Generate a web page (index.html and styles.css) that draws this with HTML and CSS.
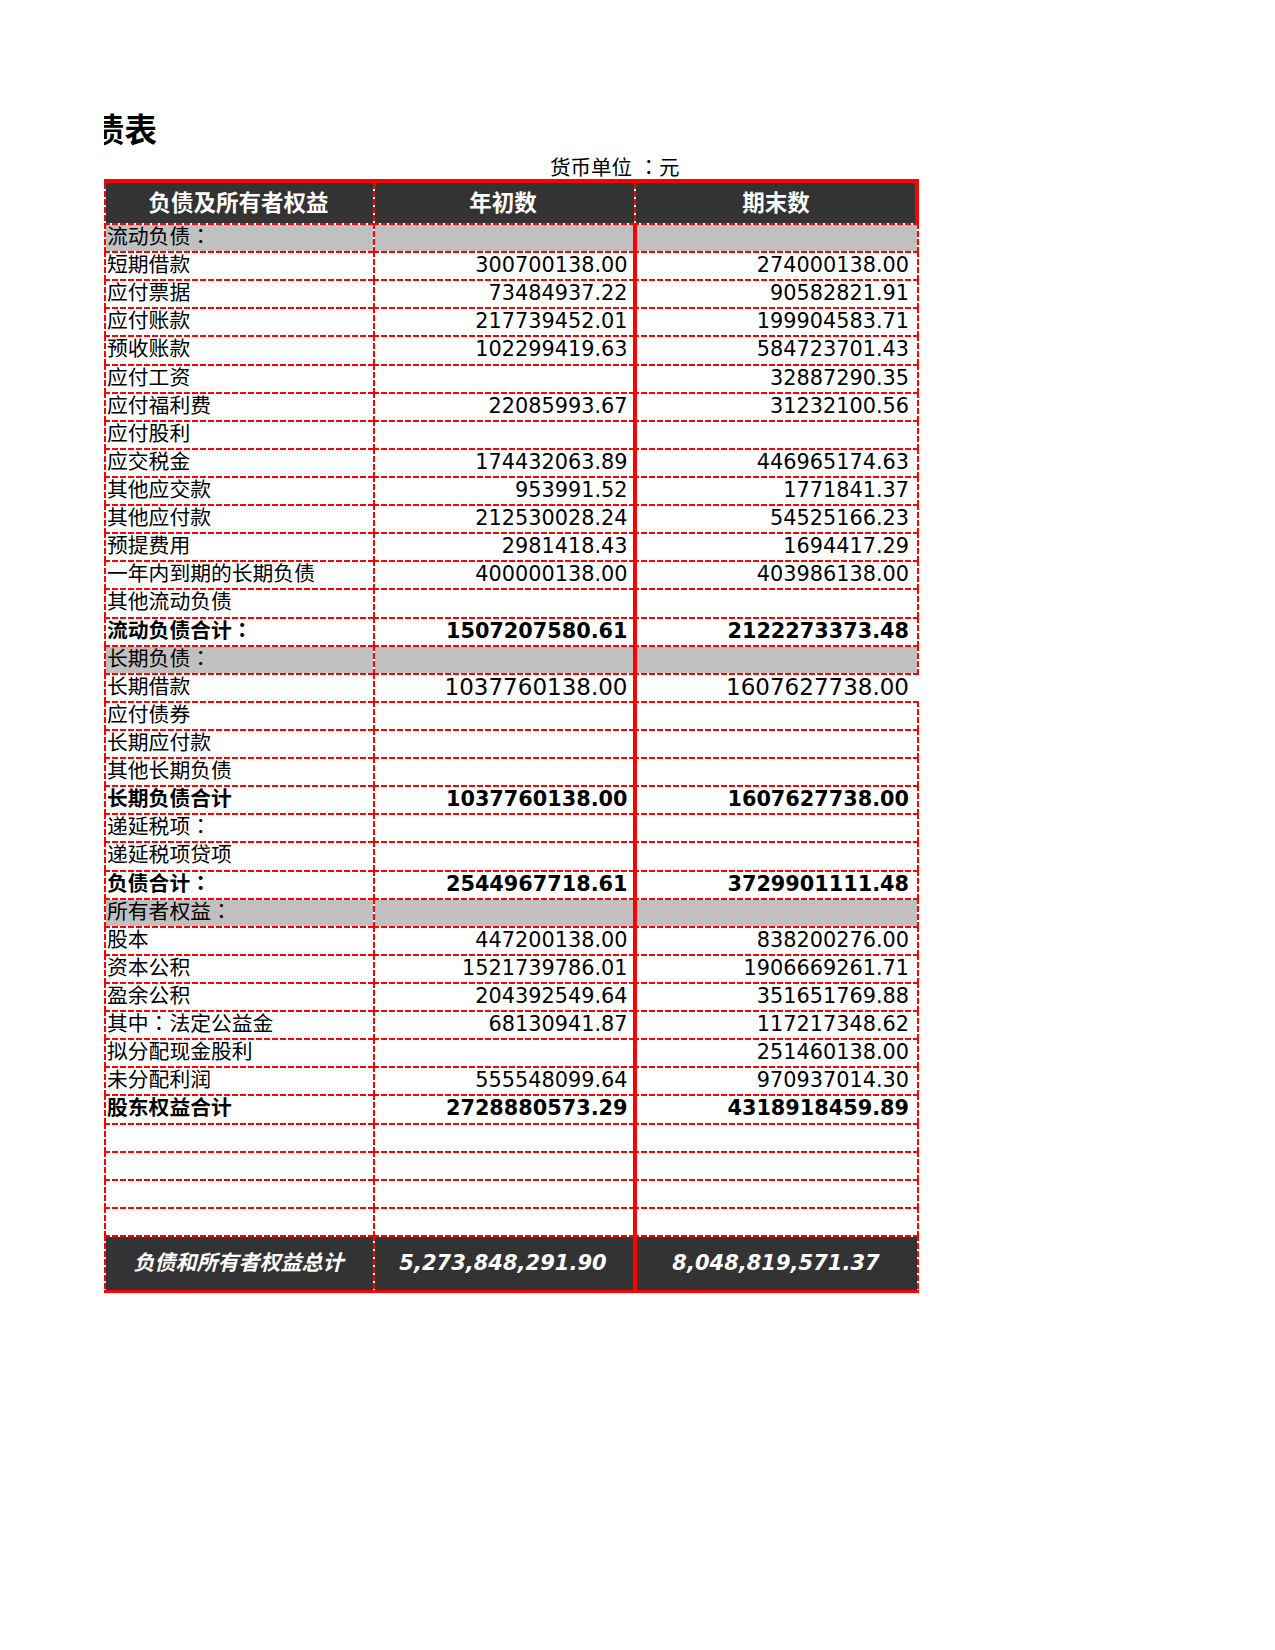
FILE: index.html
```html
<!DOCTYPE html>
<html lang="zh-CN">
<head>
<meta charset="utf-8">
<title>资产负债表</title>
<link rel="stylesheet" href="styles.css">
</head>
<body>
<div class="page">
  <div class="title">债表</div>
  <div class="unit">货币单位 <span class="cl" lang="zh-TW">：</span>元</div>
  <div class="sheet">
    <div class="row hdr"><div class="cell c1">负债及所有者权益</div><div class="cell c2">年初数</div><div class="cell c3">期末数</div></div>

    <div class="row g"><div class="cell c1">流动负债<span class="cl" lang="zh-TW">：</span></div><div class="cell c2"></div><div class="cell c3"></div></div>
    <div class="row"><div class="cell c1">短期借款</div><div class="cell c2">300700138.00</div><div class="cell c3">274000138.00</div></div>
    <div class="row"><div class="cell c1">应付票据</div><div class="cell c2">73484937.22</div><div class="cell c3">90582821.91</div></div>
    <div class="row"><div class="cell c1">应付账款</div><div class="cell c2">217739452.01</div><div class="cell c3">199904583.71</div></div>
    <div class="row"><div class="cell c1">预收账款</div><div class="cell c2">102299419.63</div><div class="cell c3">584723701.43</div></div>
    <div class="row"><div class="cell c1">应付工资</div><div class="cell c2"></div><div class="cell c3">32887290.35</div></div>
    <div class="row"><div class="cell c1">应付福利费</div><div class="cell c2">22085993.67</div><div class="cell c3">31232100.56</div></div>
    <div class="row"><div class="cell c1">应付股利</div><div class="cell c2"></div><div class="cell c3"></div></div>
    <div class="row"><div class="cell c1">应交税金</div><div class="cell c2">174432063.89</div><div class="cell c3">446965174.63</div></div>
    <div class="row"><div class="cell c1">其他应交款</div><div class="cell c2">953991.52</div><div class="cell c3">1771841.37</div></div>
    <div class="row"><div class="cell c1">其他应付款</div><div class="cell c2">212530028.24</div><div class="cell c3">54525166.23</div></div>
    <div class="row"><div class="cell c1">预提费用</div><div class="cell c2">2981418.43</div><div class="cell c3">1694417.29</div></div>
    <div class="row"><div class="cell c1">一年内到期的长期负债</div><div class="cell c2">400000138.00</div><div class="cell c3">403986138.00</div></div>
    <div class="row"><div class="cell c1">其他流动负债</div><div class="cell c2"></div><div class="cell c3"></div></div>
    <div class="row b"><div class="cell c1">流动负债合计<span class="cl" lang="zh-TW">：</span></div><div class="cell c2">1507207580.61</div><div class="cell c3">2122273373.48</div></div>

    <div class="row g"><div class="cell c1">长期负债<span class="cl" lang="zh-TW">：</span></div><div class="cell c2"></div><div class="cell c3"></div></div>
    <div class="row big nr"><div class="cell c1">长期借款</div><div class="cell c2">1037760138.00</div><div class="cell c3">1607627738.00</div></div>
    <div class="row"><div class="cell c1">应付债券</div><div class="cell c2"></div><div class="cell c3"></div></div>
    <div class="row"><div class="cell c1">长期应付款</div><div class="cell c2"></div><div class="cell c3"></div></div>
    <div class="row"><div class="cell c1">其他长期负债</div><div class="cell c2"></div><div class="cell c3"></div></div>
    <div class="row b"><div class="cell c1">长期负债合计</div><div class="cell c2">1037760138.00</div><div class="cell c3">1607627738.00</div></div>
    <div class="row"><div class="cell c1">递延税项<span class="cl" lang="zh-TW">：</span></div><div class="cell c2"></div><div class="cell c3"></div></div>
    <div class="row"><div class="cell c1">递延税项贷项</div><div class="cell c2"></div><div class="cell c3"></div></div>
    <div class="row b"><div class="cell c1">负债合计<span class="cl" lang="zh-TW">：</span></div><div class="cell c2">2544967718.61</div><div class="cell c3">3729901111.48</div></div>

    <div class="row g"><div class="cell c1">所有者权益<span class="cl" lang="zh-TW">：</span></div><div class="cell c2"></div><div class="cell c3"></div></div>
    <div class="row"><div class="cell c1">股本</div><div class="cell c2">447200138.00</div><div class="cell c3">838200276.00</div></div>
    <div class="row"><div class="cell c1">资本公积</div><div class="cell c2">1521739786.01</div><div class="cell c3">1906669261.71</div></div>
    <div class="row"><div class="cell c1">盈余公积</div><div class="cell c2">204392549.64</div><div class="cell c3">351651769.88</div></div>
    <div class="row"><div class="cell c1">其中<span class="cl" lang="zh-TW">：</span>法定公益金</div><div class="cell c2">68130941.87</div><div class="cell c3">117217348.62</div></div>
    <div class="row"><div class="cell c1">拟分配现金股利</div><div class="cell c2"></div><div class="cell c3">251460138.00</div></div>
    <div class="row"><div class="cell c1">未分配利润</div><div class="cell c2">555548099.64</div><div class="cell c3">970937014.30</div></div>
    <div class="row b"><div class="cell c1">股东权益合计</div><div class="cell c2">2728880573.29</div><div class="cell c3">4318918459.89</div></div>

    <div class="row"><div class="cell c1"></div><div class="cell c2"></div><div class="cell c3"></div></div>
    <div class="row"><div class="cell c1"></div><div class="cell c2"></div><div class="cell c3"></div></div>
    <div class="row"><div class="cell c1"></div><div class="cell c2"></div><div class="cell c3"></div></div>
    <div class="row"><div class="cell c1"></div><div class="cell c2"></div><div class="cell c3"></div></div>

    <div class="row ftr"><div class="cell c1">负债和所有者权益总计</div><div class="cell c2">5,273,848,291.90</div><div class="cell c3">8,048,819,571.37</div></div>
  </div>
</div>
</body>
</html>
```

FILE: styles.css
```css
:root {
  --dh: repeating-linear-gradient(90deg, #ff0000 0 6px, #ffffff 6px 8px);
  --dv: repeating-linear-gradient(180deg, #ff0000 0 6px, #ffffff 6px 8px);
  --solid: linear-gradient(#ff0000, #ff0000);
}

html, body {
  margin: 0;
  padding: 0;
  background: #ffffff;
}

.page {
  padding: 108px 0 0 104px;
  font-family: "DejaVu Sans", "Noto Sans CJK SC", sans-serif;
  color: #000000;
}

.title {
  width: 200px;
  height: 40px;
  overflow: hidden;
  font-family: "Noto Sans CJK SC", sans-serif;
  font-weight: bold;
  font-size: 32.5px;
  line-height: 40px;
  text-indent: -12px;
  white-space: nowrap;
}

.unit {
  margin-top: 9px;
  height: 22px;
  padding-left: 446px;
  font-size: 20.5px;
  line-height: 22px;
  white-space: nowrap;
}

/* full-width colon with centred dots */
.cl {
  font-family: "Noto Sans CJK TC", "Noto Sans CJK JP", sans-serif;
  line-height: 0;
}

.sheet {
  width: 815px;
  border-top: 4px solid #ff0000;
  border-bottom: 3px solid #ff0000;
}

.row {
  display: grid;
  grid-template-columns: 269px 260px 286px;
  height: 28.12px;
  font-size: 20.8px;
}

.cell {
  box-sizing: border-box;
  padding-top: 2px;
  line-height: 25px;
  white-space: nowrap;
  background-repeat: no-repeat;
}

.c1, .c2 {
  background-image: var(--dh), var(--dv);
  background-size: 100% 2px, 2px 100%;
  background-position: 0 0, 0 0;
}

.c3 {
  background-image: var(--dh), var(--solid), var(--dv);
  background-size: 100% 2px, 4px 100%, 2px 100%;
  background-position: 0 0, 0 0, 100% 0;
}

.c1 {
  padding-left: 3px;
}

.c2 {
  text-align: right;
  padding-right: 5.5px;
}

.c3 {
  text-align: right;
  padding-right: 10px;
}

/* gray section rows */
.g .cell {
  background-color: #c0c0c0;
}

/* bold subtotal rows */
.b .cell {
  font-weight: bold;
}

/* larger numbers */
.big .c2, .big .c3 {
  font-size: 23px;
}

/* row without right edge line */
.nr .c3 {
  background-image: var(--dh), var(--solid);
  background-size: 100% 2px, 4px 100%;
  background-position: 0 0, 0 0;
}

/* header */
.hdr {
  height: 40px;
}

.hdr .cell {
  padding: 0;
  background-color: #333333;
  color: #ffffff;
  font-weight: bold;
  font-size: 22.5px;
  line-height: 40px;
  text-align: center;
}

.hdr .c1, .hdr .c2 {
  background-image: var(--dv);
  background-size: 2px 100%;
  background-position: 0 0;
}

.hdr .c3 {
  background-image: var(--dv), var(--solid);
  background-size: 2px 100%, 4px 100%;
  background-position: 1px 0, 100% 0;
}

/* footer */
.ftr {
  height: 54.7px;
}

.ftr .cell {
  padding: 2px 0 0 0;
  background-color: #333333;
  color: #ffffff;
  font-weight: bold;
  font-style: italic;
  font-size: 21px;
  line-height: 52px;
  text-align: center;
}
```
